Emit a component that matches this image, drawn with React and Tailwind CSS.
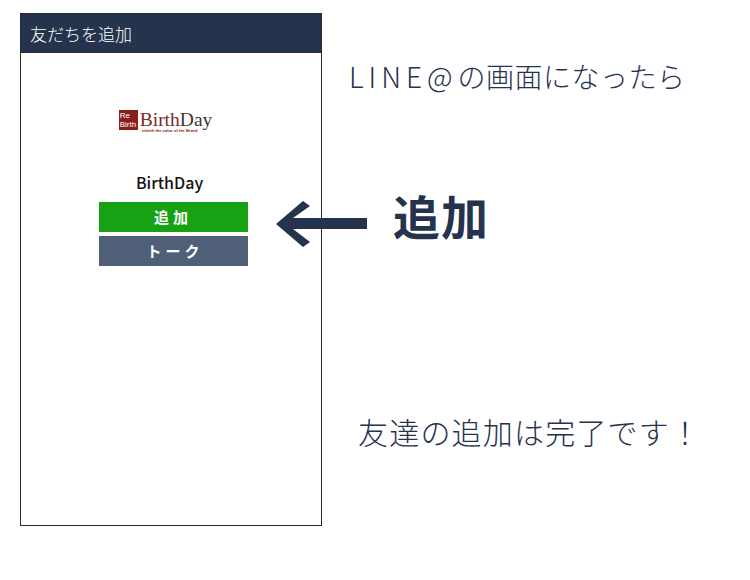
const jp = "font-['Noto_Sans_CJK_JP','Noto_Sans',sans-serif]";

const Logo = () => (
  <div className="flex items-start">
    <div className="w-[19px] h-[20px] bg-[#8a1f1c] text-white text-[8px] leading-[9px] font-['Liberation_Sans',sans-serif] pt-[1px] pl-[1px]">
      <div>Re</div>
      <div>Birth</div>
    </div>
    <div className="ml-[2px] pt-[1px]">
      <div className="font-['Liberation_Serif',serif] text-[19.5px] leading-[17px] text-[#7a2a28] whitespace-nowrap">
        Birth<span className="text-[#3c3636]">Day</span>
      </div>
      <div className="ml-[2px] mt-[1px] font-['Liberation_Sans',sans-serif] text-[4px] leading-[4px] font-bold text-[#8a1f1c] whitespace-nowrap">
        rebirth the value of the Brand
      </div>
    </div>
  </div>
);

const Arrow = () => (
  <svg width="92" height="48" viewBox="0 0 92 48" className="relative z-10 shrink-0 mt-[15px]">
    <path d="M0 24 L27 1 L34 6 L17 18 H91 V29 H17 L34 42 L27 47 Z" fill="#26334d" />
  </svg>
);

export default function App() {
  return (
    <div className={`w-[750px] h-[580px] bg-white flex items-start overflow-hidden ${jp}`}>
      {/* Phone */}
      <div className="ml-[20px] mt-[13px] w-[302px] h-[513px] shrink-0 border border-[#2b2b2b] flex flex-col items-center">
        <div className="w-full h-[39px] bg-[#26334d] text-white text-[17px] leading-[39px] font-light pl-[9px]">
          友だちを追加
        </div>
        <div className="mt-[57px] -ml-[11px]">
          <Logo />
        </div>
        <div className="mt-[37px] ml-[-3px] text-[16px] leading-[24px] font-medium text-[#111]">
          BirthDay
        </div>
        <div className="mt-[8px] ml-[4px] w-[149px] h-[30px] bg-[#16a213] text-white text-[15px] leading-[30px] font-bold text-center tracking-[4px]">
          追加
        </div>
        <div className="mt-[4px] ml-[4px] w-[149px] h-[30px] pl-[4px] bg-[#505f78] text-white text-[15px] leading-[29px] font-bold text-center tracking-[4px]">
          トーク
        </div>
      </div>

      {/* Notes */}
      <div className="flex flex-col text-[#26334d]">
        <div className="mt-[57px] ml-[27px] text-[28px] leading-[38px] font-light tracking-[0.5px] whitespace-nowrap">
          <span className="tracking-[5px]">LINE@</span>の画面になったら
        </div>
        <div className="mt-[90px] -ml-[46px] flex items-start">
          <Arrow />
          <div className="ml-[25px] text-[47px] leading-[60px] font-bold tracking-[1px] whitespace-nowrap">追加</div>
        </div>
        <div className="mt-[163px] ml-[36px] text-[30px] leading-[40px] font-light tracking-[1.2px] whitespace-nowrap">
          友達の追加は完了です！
        </div>
      </div>
    </div>
  );
}
